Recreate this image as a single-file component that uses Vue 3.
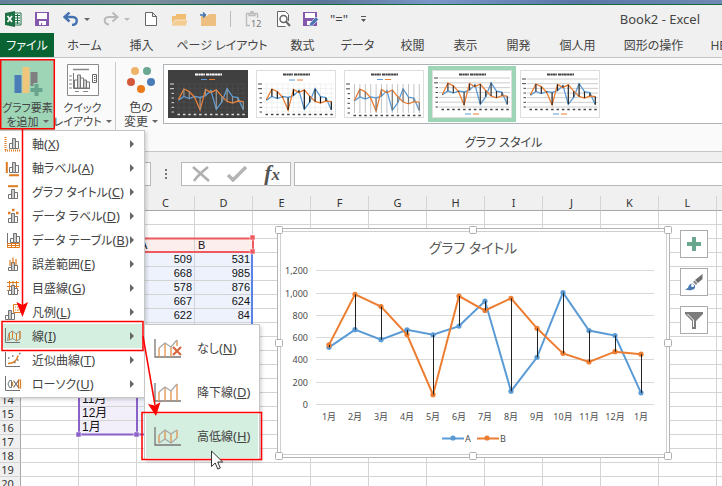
<script setup>
const tabs = ['ホーム', '挿入', 'ページ レイアウト', '数式', 'データ', '校閲', '表示', '開発', '個人用', '図形の操作', 'HELP']

const months = ['1月', '2月', '3月', '4月', '5月', '6月', '7月', '8月', '9月', '10月', '11月', '12月', '1月']
const seriesA = [509, 668, 578, 667, 622, 700, 925, 115, 420, 1000, 660, 615, 100]
const seriesB = [531, 985, 876, 624, 84, 970, 840, 950, 680, 455, 378, 470, 448]
const ticks = [1200, 1000, 800, 600, 400, 200, 0]

const px = (i) => 52 + i * 26
const py = (v) => 176 - v * 0.1113
const line = (s) => s.map((v, i) => `${px(i)},${py(v)}`).join(' ')

const thumbs = [
  { id: 1, dark: true, top: 14, bottom: 42, legend: 9.5, hl: '#999', grid: '#555', vertical: true },
  { id: 2, top: 14, bottom: 42, legend: 10, hl: '#111', grid: '#ddd', vertical: true, faint: true },
  { id: 3, top: 14, bottom: 43, legend: 9.5, hl: '#777', grid: '#c4c4c4', vertical: true, noRows: true },
  { id: 4, top: 8, bottom: 37, legend: 44, hl: '#333', grid: '#ccc', selected: true },
  { id: 5, top: 9, bottom: 37, legend: 44, hl: '#222', grid: '#ccc' },
]
const tx = (i) => 10.5 + i * 5.4
const ty = (t, v) => t.bottom - ((t.bottom - t.top) * v) / 1200
const tline = (t, s) => s.map((v, i) => `${tx(i)},${ty(t, v)}`).join(' ')

const G = '#737373'
const O = '#df7a1f'
const bars = (x, y, h = 11) => [
  { d: `M${x} ${y}v-${h - 5}h3v${h - 5}z`, s: G, f: '#fff' },
  { d: `M${x + 6} ${y}v-${h - 3}h3v${h - 3}z`, s: G, f: '#fff' },
  { d: `M${x + 3} ${y}v-${h}h3v${h}z`, s: G, f: '#c9c9c9' },
]
const axes = { d: 'M1.5 1v14.5H16', s: G }
const menu = [
  { t: '軸', k: 'X', icon: [{ d: 'M1.5 2v14M1 15.5h15.5', s: O, w: 2, dash: '1 1' }, ...bars(5.5, 13.5, 10)] },
  { t: '軸ラベル', k: 'A', icon: [{ d: 'M2.8 3v11M5 16.2h10', s: O, w: 2 }, ...bars(5.5, 13.5, 10)] },
  { t: 'グラフ タイトル', k: 'C', icon: [{ d: 'M4 3.2h10', s: O, w: 2 }, ...bars(4.5, 15.5, 9)] },
  { t: 'データ ラベル', k: 'D', icon: [{ d: 'M4 6h2.5M8 3h2.5M12 6h2.5', s: O, w: 2.4 }, ...bars(4.5, 15.5, 9)] },
  { t: 'データ テーブル', k: 'B', icon: [{ d: 'M3.5 2v12', s: G }, ...bars(6.5, 11.5, 9), { d: 'M3.5 12.5h12v4h-12zM3.5 14.5h12M7.5 12.5v4M11.5 12.5v4', s: O, f: '#fff' }] },
  { t: '誤差範囲', k: 'E', icon: [...bars(4.5, 15.5, 8), { d: 'M6 5v6M9 2.5v6M12 4v6', s: O, w: 1.2 }] },
  { t: '目盛線', k: 'G', icon: [{ d: 'M3 3.5h12M3 7.5h12M3 11.5h12M5.5 2v13M9 2v13M12.5 2v13', s: O }, ...bars(4.5, 15.5, 9)] },
  { t: '凡例', k: 'L', icon: [...bars(1.5, 16.5, 9), { d: 'M9.5 1.5h7v8h-7z', s: O, f: '#fff' }, { d: 'M11 4h1M13 4h2.5M11 7h1M13 7h2.5', s: O }] },
  { t: '線', k: 'I', active: true, icon: [axes, { d: 'M3.5 13.5L5 6l3.500-2 3.500 3L16 4v8l-3.500 2L9 11.500z', s: '#8d8d8d' }, { d: 'M5.500 6v7M8.500 4.500v7M12.500 7v6.500M16 4v8', s: O }] },
  { t: '近似曲線', k: 'T', icon: [axes, { d: 'M4 12.500c6 0 9-3 10-8', s: O, w: 1.4 }, { d: 'M4 7h1.500M8 5h1.500M10 11.500h1.500M13 9h1.500M15 2.500h1.500', s: G, w: 1.4 }] },
  { t: 'ローソク', k: 'U', icon: [axes, { d: 'M5.500 5.500h2v7h-2l-1.500-3.500z', s: G }, { d: 'M8.500 7v4M14.500 5h2v8h-2z', s: O, w: 1.2 }, { d: 'M9.500 5.500l5 7M9.500 12.500l5-7', s: G, w: 1.2 }] },
]

const subIcon = 'M1 1v18h26'
const submenu = [
  { t: 'なし', k: 'N', gray: 'M5 10L11 5l6 4 6-7', orange: 'M5 10v9M11 5v14M17 9v10M23 2v6', cross: true },
  { t: '降下線', k: 'D', gray: 'M5 10L11 5l6 4 6-7', orange: 'M5 10v9M11 5v14M17 9v10M23 2v17' },
  { t: '高低線', k: 'H', active: true, gray: 'M5 9L11 4l6 4 6-4M5 17l6-4 6 4 6-5', orange: 'M5 9v8M11 4v9M17 8v9M23 4v8' },
]

const cols = [...'ABCDEFGHIJKL', '']
const values = {
  C3: 'A', D3: 'B',
  C4: 509, D4: 531, C5: 668, D5: 985, C6: 578, D6: 876, C7: 667, D7: 624, C8: 622, D8: 84,
  B14: '11月', B15: '12月', B16: '1月',
}
const cellClass = (c, r) => ({
  head: r === 3 && (c === 'C' || c === 'D'),
  data: r > 3 && r < 17 && (c === 'C' || c === 'D'),
  cat: r > 3 && r < 17 && c === 'B',
})
const handles = [[2, 2], [196, 2], [391, 2], [2, 115], [391, 115], [2, 228], [196, 228], [391, 228]]
</script>

<template>
  <div class="app">
    <div class="desktop"></div>
    <header class="titlebar">
      <div class="qat">
        <svg width="17" height="16" viewBox="0 0 17 16"><path d="M9 2h7v12H9z" fill="#fff" stroke="#1e7145" /><path d="M10 4.500h5M10 7h5M10 9.500h5M10 12h5M12.500 3v10" stroke="#1e7145" /><path d="M0 2l10-2v16L0 14z" fill="#1e7145" /><path d="M2.500 5l4.500 6M7 5l-4.500 6" stroke="#fff" stroke-width="1.700" /></svg>
        <button aria-label="保存"><svg width="14" height="14" viewBox="0 0 14 14"><path d="M0 0h14v14H0z" fill="#8458ad" /><path d="M2 1h10v6H2zM4 9h7v4H7v-2H6v2H4z" fill="#fff" /></svg></button>
        <div class="pair">
          <button aria-label="元に戻す"><svg width="16" height="14" viewBox="0 0 16 14"><path d="M2 5h7.500c6 0 5.500 7.500-.5 8" fill="none" stroke="#4472b0" stroke-width="2.400" /><path d="M6.500.5L1.500 5l5 4.500" fill="none" stroke="#4472b0" stroke-width="2.400" /></svg></button>
          <i class="caret"></i>
        </div>
        <div class="pair dim">
          <button aria-label="やり直し"><svg width="16" height="14" viewBox="0 0 16 14"><path d="M14 5H6C0 5 .5 12 6 12.500" fill="none" stroke="#b9b9b9" stroke-width="2" /><path d="M9.500.5l5 4.500-5 4.500" fill="none" stroke="#b9b9b9" stroke-width="2" /></svg></button>
          <i class="caret"></i>
        </div>
        <button aria-label="新規作成"><svg width="12" height="14" viewBox="0 0 12 14"><path d="M.5.5h7l4 4v9H.5zM7.500.5v4h4" fill="#fff" stroke="#666" /></svg></button>
        <button aria-label="開く"><svg width="17" height="13" viewBox="0 0 17 13"><path d="M1 13V3h4V1h10v6l-2 6z" fill="#f0bd72" /><path d="M0 13l4-6h13l-2 6z" fill="#f3cc91" stroke="#f0f0f0" stroke-width=".7" /></svg></button>
        <button aria-label="フォルダー"><svg width="17" height="14" viewBox="0 0 17 14"><path d="M1 14V4h6l2-2h7v12z" fill="#edbf80" /><path d="M0 3h5M3 .5L5.500 3 3 5.500" fill="none" stroke="#3f6fae" stroke-width="1.300" /></svg></button>
        <span class="divider"></span>
        <button aria-label="値の貼り付け"><svg class="paste" width="17" height="17" viewBox="0 0 17 17"><path d="M5 14.500H1.500v-12h11V7M4 2.500v2h6v-2M6 2V.8h2V2" fill="none" stroke="#bbb" stroke-width="1.400" /><text x="6" y="16" font-size="9" fill="#777">12</text></svg></button>
        <button aria-label="印刷プレビュー"><svg width="15" height="16" viewBox="0 0 15 16"><path d="M12.500 10V3.500l-3-3h-8v15h8" fill="#fff" stroke="#666" /><circle cx="7.500" cy="8" r="3.500" fill="#fff" stroke="#666" stroke-width="1.500" /><path d="M10 10.500l4 4.500" stroke="#666" stroke-width="2" /></svg></button>
        <button aria-label="名前を付けて保存"><svg width="16" height="15" viewBox="0 0 16 15"><path d="M0 0h14v14H0z" fill="#8458ad" /><path d="M2 1h10v5H2zM4 9h5v4H4z" fill="#fff" /><path d="M6 14.500l1-3.500 6-6 2.500 2.500-6 6z" fill="#4a78b5" stroke="#f0f0f0" stroke-width=".6" /></svg></button>
        <button class="eq" aria-label="等号">"="</button>
        <button aria-label="クイック アクセス ツール バーのカスタマイズ"><svg width="5" height="7" viewBox="0 0 5 7"><path d="M0 .5h5" stroke="#555" /><path d="M0 3h5L2.500 6z" fill="#555" /></svg></button>
      </div>
      <h1>Book2 - Excel</h1>
    </header>

    <nav class="tabs">
      <button class="file">ファイル</button>
      <button v-for="t in tabs" :key="t">{{ t }}</button>
    </nav>

    <section class="ribbon">
      <button class="big on">
        <svg width="32" height="32" viewBox="0 0 32 32"><path d="M2.500 11h7v18h-7z" fill="#4a7db8" /><path d="M10.500 3h7v26h-7z" fill="#f0c67c" /><path d="M18.500 8h7v14h-7z" fill="#7f7f7f" /><path d="M24.500 19v13M17.500 26H32" stroke="#9fd5b7" stroke-width="6" /><path d="M24.500 20v12M18.500 26h12" stroke="#69a58d" stroke-width="4" /></svg>
        <span>グラフ要素</span><span>を追加<i class="caret"></i></span>
      </button>
      <button class="big">
        <svg width="32" height="32" viewBox="0 0 32 32"><path d="M.5.5h31v31H.5z" fill="#fff" stroke="#8a8a8a" /><path d="M6 5.500h16" stroke="#888" stroke-width="1.500" /><path d="M6.500 9v15.500H23" fill="none" stroke="#777" /><path d="M7.500 24V16h3v8zM13.500 24V14h3v10zM19.500 24v-6h3v6z" fill="#fff" stroke="#777" /><path d="M10.500 24V11h3v13zM16.500 24v-8h3v8z" fill="#ccc" stroke="#777" /><path d="M2 12h3M2 16h3M2 20h3M2 24h3M8 27.500h4M16 27.500h5" stroke="#888" /><path d="M25.500 10.500h4v8h-4z" fill="#fff" stroke="#666" /><path d="M27 12.500h1.500M27 14.500h1.500M27 16.500h1.500" stroke="#666" /></svg>
        <span>クイック</span><span>レイアウト<i class="caret"></i></span>
      </button>
      <div class="gap"></div>
      <button class="big colors">
        <svg width="28" height="32" viewBox="0 0 28 32"><circle cx="8" cy="7" r="4" fill="#f0b469" /><circle cx="20" cy="7" r="4" fill="#6aa893" /><circle cx="4" cy="18" r="4" fill="#d4593a" /><circle cx="24" cy="18" r="4" fill="#4a7db8" /><circle cx="14" cy="25" r="4" fill="#e97a1c" /></svg>
        <span>色の</span><span>変更<i class="caret"></i></span>
      </button>
      <div class="styles">
        <div class="gallery">
          <button v-for="t in thumbs" :key="t.id" :class="{ sel: t.selected }" :aria-label="'スタイル ' + t.id">
            <svg width="80" height="48" viewBox="0 0 80 48">
              <rect x=".5" y=".5" width="79" height="47" :fill="t.dark ? '#404040' : '#fff'" :stroke="t.dark ? '#404040' : '#dedede'" />
              <path d="M27 4.500h10M38 4.500h16" stroke-dasharray="3 .4 2 .3" :stroke="t.dark ? '#fff' : '#444'" stroke-width="2" />
              <g v-if="!t.noRows"><path v-for="k in ticks" :key="k" :d="`M7 ${ty(t, k)}H78`" :stroke="t.grid" :stroke-width="t.vertical ? 0.4 : 1" /></g>
              <g v-if="t.vertical"><path v-for="(m, i) in months" :key="i" :d="`M${tx(i)} ${t.top}V${t.bottom}`" :stroke="t.grid" :stroke-width="t.noRows ? 1 : 0.4" /></g>
              <path v-for="k in ticks" :key="'t' + k" :d="`M${k > 800 ? 2 : 3.500} ${ty(t, k)}H6`" :stroke="t.dark ? '#ddd' : '#444'" />
              <polyline :points="tline(t, seriesA)" fill="none" stroke="#5b9bd5" stroke-width="1.300" />
              <polyline :points="tline(t, seriesB)" fill="none" stroke="#ed7d31" stroke-width="1.300" />
              <path v-for="(m, i) in months" :key="'h' + i" :d="`M${tx(i)} ${ty(t, seriesA[i])}V${ty(t, seriesB[i])}`" :stroke="t.hl" stroke-width="1.200" />
              <path v-for="(m, i) in months" :key="'m' + i" :d="`M${tx(i) - 1} ${t.bottom + 2.500}h2.500`" :stroke="t.dark ? '#ddd' : '#444'" stroke-width="1.500" />
              <path :d="`M33 ${t.legend}h6`" stroke="#5b9bd5" /><path :d="`M41 ${t.legend}h6`" stroke="#ed7d31" />
            </svg>
          </button>
        </div>
        <p>グラフ スタイル</p>
      </div>
    </section>

    <section class="formula">
      <input class="name" aria-label="名前ボックス" />
      <svg class="dots" width="4" height="12" viewBox="0 0 4 12"><path d="M1 1h2v2H1zM1 5h2v2H1zM1 9h2v2H1z" fill="#777" /></svg>
      <div class="tools">
        <button aria-label="キャンセル"><svg width="18" height="16" viewBox="0 0 18 16"><path d="M1 1l16 14M16 1C11 5 6 9 2 15" fill="none" stroke="#b0b0b0" stroke-width="2.600" /></svg></button>
        <button aria-label="入力"><svg width="20" height="16" viewBox="0 0 20 16"><path d="M1 9l5 5L19 1" fill="none" stroke="#b5b5b5" stroke-width="3.500" /></svg></button>
        <button class="fx" aria-label="関数の挿入">f<small>x</small></button>
      </div>
      <input class="bar" aria-label="数式バー" />
    </section>

    <main class="sheet">
      <table>
        <thead>
          <tr><th class="rownum"></th><th v-for="c in cols" :key="c">{{ c }}</th></tr>
        </thead>
        <tbody>
          <tr v-for="r in 20" :key="r">
            <th class="rownum">{{ r }}</th>
            <td v-for="c in cols" :key="c" :class="cellClass(c, r)">{{ values[c + r] }}</td>
          </tr>
        </tbody>
      </table>

      <svg class="ranges" width="260" height="250" viewBox="0 0 260 250">
        <path d="M252 58v180" stroke="#5b83e6" stroke-width="2" />
        <path d="M136 42.500h117v13.500H136z" fill="none" stroke="#ee5a5f" stroke-width="2" />
        <path d="M250 39h5v5h-5zM250 53h5v5h-5z" fill="#ee5a5f" stroke="#fff" stroke-width=".5" />
        <path d="M79 56v182.500h66M137 56v182" fill="none" stroke="#8a61c6" stroke-width="2" />
        <path d="M76 236h5v5h-5zM134 236h5v5h-5z" fill="#8a61c6" stroke="#fff" stroke-width=".5" />
      </svg>

      <svg class="chart" width="396" height="234" viewBox="0 0 396 234" role="img" aria-label="グラフ タイトル">
        <rect x=".5" y=".5" width="392" height="229" fill="#fff" stroke="#b5b5b5" />
        <rect x="3.500" y="3.500" width="386" height="223" fill="#fff" stroke="#cfcfcf" />
        <text x="196" y="25" class="ctitle">グラフ タイトル</text>
        <g v-for="k in ticks" :key="k">
          <path :d="`M39 ${Math.round(py(k)) + 0.5}H377`" stroke="#d9d9d9" />
          <text x="31" :y="Math.round(py(k)) + 4" class="tick">{{ k.toLocaleString('en-US') }}</text>
        </g>
        <text v-for="(m, i) in months" :key="i" :x="px(i)" y="192" class="month">{{ m }}</text>
        <polyline :points="line(seriesA)" fill="none" stroke="#5b9bd5" stroke-width="2" />
        <polyline :points="line(seriesB)" fill="none" stroke="#ed7d31" stroke-width="2" />
        <circle v-for="(v, i) in seriesA" :key="'a' + i" :cx="px(i)" :cy="py(v)" r="2.600" fill="#5b9bd5" />
        <circle v-for="(v, i) in seriesB" :key="'b' + i" :cx="px(i)" :cy="py(v)" r="2.600" fill="#ed7d31" />
        <path v-for="(v, i) in seriesA" :key="'l' + i" :d="`M${px(i) + 0.5} ${py(v)}V${py(seriesB[i])}`" stroke="#222" />
        <path d="M165 210.500h22" stroke="#5b9bd5" stroke-width="2" /><circle cx="176" cy="210" r="2.600" fill="#5b9bd5" />
        <path d="M200 210.500h22" stroke="#ed7d31" stroke-width="2" /><circle cx="210" cy="210" r="2.600" fill="#ed7d31" />
        <text x="191" y="214" class="month">A</text><text x="226" y="214" class="month">B</text>
        <rect v-for="(h, i) in handles" :key="'s' + i" :x="h[0] - 3.500" :y="h[1] - 3.500" width="7" height="7" rx="1" fill="#fff" stroke="#b0b0b0" />
      </svg>

      <div class="side">
        <button aria-label="グラフ要素"><svg width="14" height="14" viewBox="0 0 14 14"><path d="M7 0v14M0 7h14" stroke="#69a78f" stroke-width="4" /></svg></button>
        <button aria-label="グラフ スタイル"><svg width="18" height="18" viewBox="0 0 18 18"><path d="M17.500 1v5L13 10l-3-3z" fill="#6f6f6f" /><path d="M9.500 7.500l3 3-1.500 1.500-3-3z" fill="#888" /><path d="M0 16.500c3-1 3-2 4-4s4-2.500 5.500-.5 0 5-3 5c-2 .5-4 0-6.500-.5z" fill="#4a78b5" /><circle cx="7.500" cy="12.500" r="1.500" fill="#fff" /></svg></button>
        <button aria-label="グラフ フィルター"><svg width="18" height="17" viewBox="0 0 18 17"><path d="M0 0h18v2l-7 7v8H7V9L0 2z" fill="#7c7c7c" /><path d="M2.500 2l6 6v7" fill="none" stroke="#fff" /></svg></button>
      </div>
    </main>

    <div class="menu">
      <button v-for="m in menu" :key="m.k" :class="{ active: m.active }">
        <svg width="18" height="18" viewBox="0 0 18 18"><path v-for="(p, i) in m.icon" :key="i" :d="p.d" :fill="p.f || 'none'" :stroke="p.s" :stroke-width="p.w || 1" :stroke-dasharray="p.dash" /></svg>
        <span class="label">{{ m.t }}<span class="key">(<u>{{ m.k }}</u>)</span></span>
        <i class="more"></i>
      </button>
    </div>
    <div class="submenu">
      <button v-for="m in submenu" :key="m.k" :class="{ active: m.active }">
        <svg width="28" height="20" viewBox="0 0 28 20"><g fill="none"><path :d="subIcon" stroke="#777" stroke-width="1.300" /><path :d="m.orange" stroke="#e2914b" stroke-width="1.300" /><path :d="m.gray" stroke="#a8a8a8" stroke-width="1.300" /><path v-if="m.cross" d="M19 9l8 8M27 9l-8 8" stroke="#d9663f" stroke-width="2.200" /></g></svg>
        <span class="label">{{ m.t }}<span class="key">(<u>{{ m.k }}</u>)</span></span>
      </button>
    </div>

    <svg class="marks" width="270" height="486" viewBox="0 0 270 486">
      <g fill="none" stroke="#f00" stroke-width="1.500">
        <path d="M.7 59.700h53.600v69H.7z" /><path d="M22.500 129v176" /><path d="M2 321.500h141v29H2z" /><path d="M143 336l12 69" /><path d="M142 412.500h119.500v47H142z" />
      </g>
      <path d="M16.500 302l6 3 5.500-3-5.500 15zM148 404l7 1.500 5.500-3.500L156 416z" fill="#f00" />
      <path d="M211.500 451v15.500l3.700-3.500 2.600 6 2.500-1-2.600-6h5z" fill="#fff" stroke="#333" />
    </svg>
  </div>
</template>

<style>
body { overflow: hidden; }
</style>

<style scoped>
* { box-sizing: border-box; }
.app { position: relative; display: flex; flex-direction: column; height: 100vh; overflow: hidden; background: #f0f0f0; color: #444; font: 12px "Noto Sans", "Noto Sans CJK JP", sans-serif; font-feature-settings: "palt"; }
button { display: flex; align-items: center; justify-content: center; margin: 0; padding: 0; border: 0; background: none; color: inherit; font: inherit; font-feature-settings: inherit; white-space: nowrap; }
svg { display: block; flex: none; }
.desktop { flex: none; height: 4px; background: linear-gradient(90deg, #66809c, #7d8f9d 20%, #5d7699 45%, #7b98c9 60%, #5b78a8 80%, #7089b5); }
.titlebar { flex: none; display: flex; justify-content: space-between; align-items: center; height: 29px; padding-right: 22px; border-top: 1px solid #12693c; }
.qat { display: grid; grid-template-columns: 27px 30px 38px 42px 27px 31px 26px 18px 28px 32px 24px 32px 16px; align-items: center; justify-items: center; }
.paste { overflow: visible; }
.pair { display: flex; align-items: center; gap: 5px; }
.caret { display: inline-block; border: 3px solid transparent; border-top-color: #666; border-bottom: 0; }
.dim .caret { border-top-color: #bbb; }
.divider { width: 1px; height: 16px; background: #bbb; }
.eq { font-size: 13px; }
h1 { margin: 0; font-size: 13px; line-height: 18px; font-weight: 400; }
.tabs { flex: none; display: grid; grid-template-columns: 54px 61px 53px 108px 53px 57px 53px 53px 53px 65px 87px 56px; height: 25px; border-bottom: 1px solid #c6c6c6; overflow: hidden; }
.tabs .file { background: #0a6332; color: #fff; }
.ribbon { flex: none; display: flex; height: 94px; background: #fafafa; border-bottom: 1px solid #c6c6c6; }
.big { flex: none; flex-direction: column; justify-content: flex-start; width: 55px; height: 71px; margin-top: 1px; padding-top: 5px; font-size: 11px; line-height: 14px; }
.big svg { margin-bottom: 5px; }
.big .caret { margin: 0 0 3px 4px; }
.on { background: #9fd5b7; }
.gap { width: 1px; height: 68px; margin: 4px 0 0 5px; background: #ccc; }
.colors { width: 47px; padding-left: 3px; font-size: 12px; }
.styles { flex: 1; min-width: 0; margin-top: 6px; }
.gallery { display: flex; height: 60px; padding: 1px 0; background: #fff; border: solid #adb3b7; border-width: 1px 0 1px 1px; }
.gallery button { flex: none; border: 4px solid transparent; }
.gallery .sel { border-color: #9fd5b7; }
.styles p { margin: 0; padding: 10px 0 0 122px; line-height: 18px; text-align: center; }
.formula { flex: none; display: flex; align-items: center; height: 44px; padding-bottom: 1px; }
input { height: 24px; margin: 0; padding: 0 4px; border: 1px solid #b8b8b8; border-radius: 0; background: #fff; font: inherit; outline: 0; }
.name { width: 151px; }
.dots { margin: 0 13px; }
.tools { display: flex; align-items: center; justify-content: space-between; width: 110px; height: 24px; padding: 0 10px; border: 1px solid #b8b8b8; background: #fff; }
.bar { flex: 1; margin-left: 3px; border-right: 0; }
.fx { font: italic bold 22px/20px "Liberation Serif", serif; color: #555; align-items: baseline; }
.fx small { font-size: 17px; }
.sheet { position: relative; flex: 1; min-height: 0; overflow: hidden; background: #fff; }
table { table-layout: fixed; width: 775px; border-collapse: separate; border-spacing: 0; }
th, td { height: 14px; padding: 0; border: solid #d4d4d4; border-width: 0 1px 1px 0; line-height: 13px; font-weight: 400; overflow: hidden; }
thead th { height: 15px; width: 58px; line-height: 14px; background: #f0f0f0; border-bottom-color: #a8a8a8; color: #333; font-size: 11px; }
th.rownum { width: 21px; padding-right: 5px; background: #f0f0f0; border-right-color: #a8a8a8; color: #333; font-size: 11px; }
td { padding: 0 2px 0 3px; color: #111; font: 11px/13px "Liberation Sans", "Noto Sans CJK JP", sans-serif; }
td.head { background: #fdeeee; }
td.data { background: #edf2fd; text-align: right; }
td.cat { background: #f3effa; font-size: 12px; }
.ranges { position: absolute; left: 0; top: 0; }
.chart { position: absolute; left: 277px; top: 32px; overflow: visible; }
.chart text { fill: #4d4d4d; }
.chart .ctitle { font-size: 14px; text-anchor: middle; fill: #595959; }
.tick { font-size: 9px; text-anchor: end; }
.month { font-size: 9px; text-anchor: middle; }
.side { position: absolute; left: 680px; top: 34px; display: grid; gap: 10px; }
.side button { width: 28px; height: 28px; background: #fff; border: 1px solid #ababab; }
.menu, .submenu { position: absolute; background: #fff; border: 1px solid #c6c6c6; box-shadow: 2px 2px 3px rgba(0, 0, 0, .15); }
.menu { left: -1px; top: 130px; padding: 1px 1px 1px 2px; width: 146px; }
.menu button { width: 100%; height: 24px; padding: 0 9px 0 2px; justify-content: flex-start; }
.label { font-size: 12px; line-height: 18px; }
.key { font-size: 13px; }
.menu .label { margin-left: 10px; }
.more { margin-left: auto; border: 4px solid transparent; border-left-color: #666; border-right: 0; }
.submenu { left: 144px; top: 324px; width: 116px; padding: 1px; }
.submenu button { width: 100%; height: 44px; padding-left: 8px; gap: 15px; justify-content: flex-start; }
.active { background: #d4efe0; }
.marks { position: absolute; left: 0; top: 0; pointer-events: none; }
</style>
